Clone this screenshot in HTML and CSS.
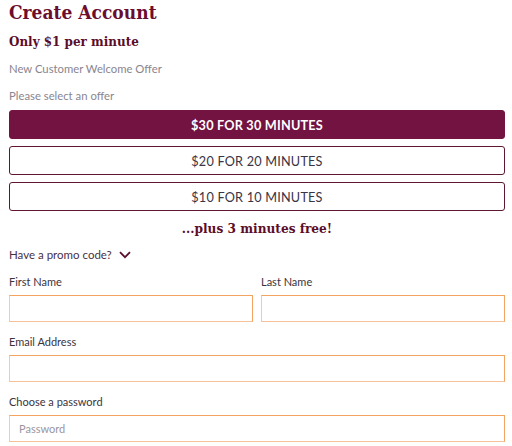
FILE: index.html
```html
<!DOCTYPE html>
<html>
<head>
<meta charset="utf-8">
<link rel="stylesheet" href="styles.css">
</head>
<body>
<div class="page">
  <h1 class="title">Create Account</h1>
  <h2 class="subtitle">Only $1 per minute</h2>
  <p class="muted welcome">New Customer Welcome Offer</p>
  <p class="muted select">Please select an offer</p>
  <div class="offers">
    <button class="offer selected">$30 FOR 30 MINUTES</button>
    <button class="offer">$20 FOR 20 MINUTES</button>
    <button class="offer">$10 FOR 10 MINUTES</button>
  </div>
  <p class="bonus">...plus 3 minutes free!</p>
  <div class="promo">
    <span>Have a promo code?</span>
    <svg class="chev" width="12" height="8" viewBox="0 0 12 8"><path d="M1 1.2 L6 6.2 L11 1.2" fill="none" stroke="#5a1030" stroke-width="1.8"/></svg>
  </div>
  <div class="row">
    <label class="field">
      <span class="label">First Name</span>
      <input class="input" type="text">
    </label>
    <label class="field">
      <span class="label">Last Name</span>
      <input class="input" type="text">
    </label>
  </div>
  <label class="field">
    <span class="label">Email Address</span>
    <input class="input" type="text">
  </label>
  <label class="field">
    <span class="label">Choose a password</span>
    <input class="input" type="password" placeholder="Password">
  </label>
</div>
</body>
</html>
```
FILE: styles.css
```css
* { box-sizing: border-box; }
body {
  margin: 0;
  background: #fff;
  font-family: "Lato", "Open Sans", sans-serif;
  color: #3a3440;
}
.page {
  padding: 0 7px 0 9px;
}
.title {
  margin: 0;
  padding-top: 0;
  font-family: "DejaVu Serif Condensed", "DejaVu Serif", serif;
  font-weight: bold;
  font-size: 19px;
  line-height: 24px;
  color: #6b0d2e;
}
.subtitle {
  margin: 10px 0 0;
  font-family: "DejaVu Serif Condensed", "DejaVu Serif", serif;
  font-weight: bold;
  font-size: 13.3px;
  line-height: 16px;
  color: #5c0d28;
}
.muted {
  margin: 0;
  font-size: 11.3px;
  line-height: 14px;
  color: #8a8590;
}
.welcome { margin-top: 12px; }
.select { margin-top: 13px; }
.offers {
  margin-top: 7px;
  display: flex;
  flex-direction: column;
  gap: 7px;
}
.offer {
  height: 29px;
  border: 1px solid #5e1632;
  border-radius: 3px;
  background: #fff;
  font-family: "Lato", sans-serif;
  font-size: 12.7px;
  letter-spacing: 0.2px;
  color: #3a3445;
  padding: 0;
}
.offer.selected {
  background: #731342;
  border-color: #731342;
  color: #fff;
  font-weight: bold;
}
.bonus {
  margin: 9px 0 0;
  text-align: center;
  font-family: "DejaVu Serif Condensed", "DejaVu Serif", serif;
  font-weight: bold;
  font-size: 13.5px;
  line-height: 16px;
  color: #5c0d28;
}
.promo {
  margin-top: 12px;
  display: flex;
  align-items: center;
  gap: 7px;
  font-size: 11.5px;
  line-height: 14px;
  color: #4a3045;
}
.row {
  display: grid;
  grid-template-columns: 1fr 1fr;
  gap: 8px;
}
.field {
  display: block;
  margin-top: 13px;
}
.label {
  display: block;
  font-size: 11px;
  line-height: 14px;
  color: #3a3440;
}
.input {
  display: block;
  width: 100%;
  height: 27px;
  margin-top: 6px;
  border: 1px solid #f3a461;
  border-left-color: #f7c9a3;
  border-bottom-color: #f6c198;
  border-radius: 0;
  padding: 0 9px;
  font-family: "Lato", sans-serif;
  font-size: 11px;
  outline: none;
}
.input::placeholder { color: #9a96a0; }
```
